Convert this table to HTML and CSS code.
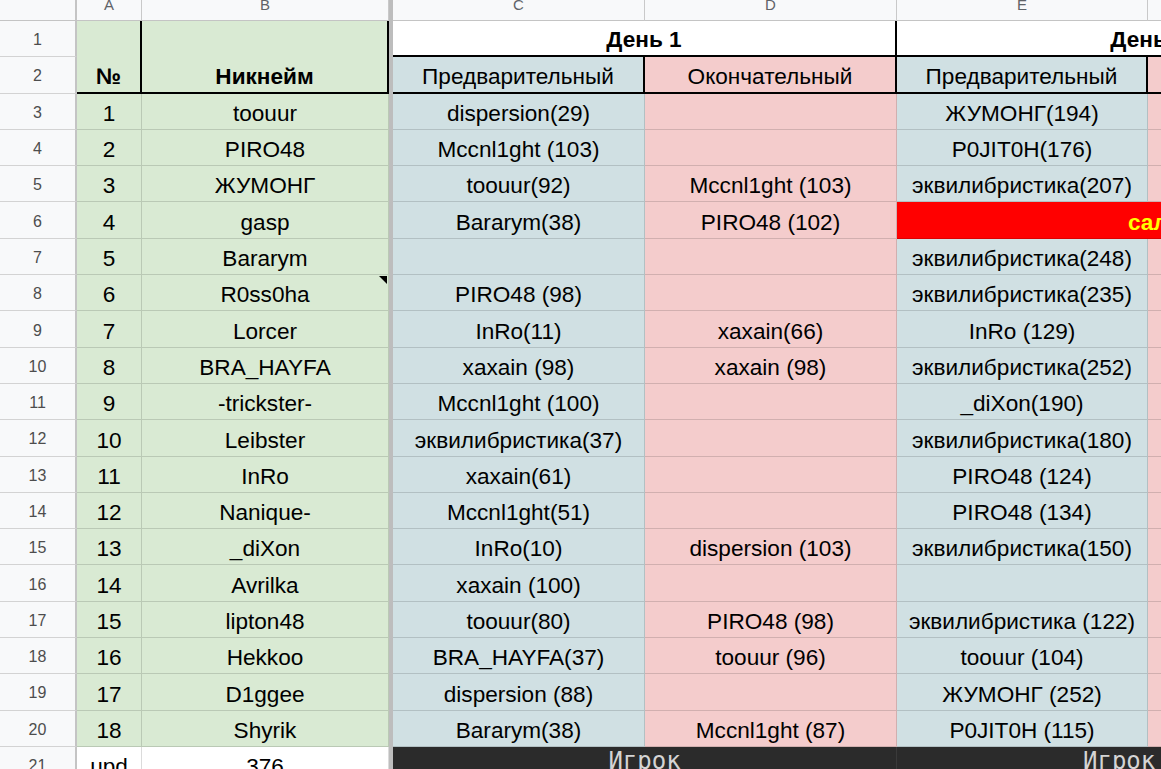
FILE: index.html
```html
<!DOCTYPE html>
<html lang="ru">
<head>
<meta charset="utf-8">
<title>Sheet</title>
<link rel="stylesheet" href="styles.css">
</head>
<body>
<div class="sheet">
  <div class="fz"></div>

  <div class="c h corner"></div>
  <div class="c h">A</div>
  <div class="c h">B</div>
  <div class="c h">C</div>
  <div class="c h">D</div>
  <div class="c h">E</div>
  <div class="c h">F</div>

  <div class="c rn">1</div>
  <div class="c g rs2 bb br bold">№</div>
  <div class="c g rs2 bb br bold">Никнейм</div>
  <div class="c w cs2 bb br bold">День 1</div>
  <div class="c w cs2 bb bold">День 2</div>

  <div class="c rn">2</div>
  <div class="c b bb br">Предварительный</div>
  <div class="c p bb br">Окончательный</div>
  <div class="c b bb br">Предварительный</div>
  <div class="c p bb">Окончательный</div>

  <div class="c rn">3</div><div class="c g">1</div><div class="c g">toouur</div><div class="c b">dispersion(29)</div><div class="c p"></div><div class="c b">ЖУМОНГ(194)</div><div class="c p"></div>
  <div class="c rn">4</div><div class="c g">2</div><div class="c g">PIRO48</div><div class="c b">Mccnl1ght (103)</div><div class="c p"></div><div class="c b">P0JIT0H(176)</div><div class="c p"></div>
  <div class="c rn">5</div><div class="c g">3</div><div class="c g">ЖУМОНГ</div><div class="c b">toouur(92)</div><div class="c p">Mccnl1ght (103)</div><div class="c b">эквилибристика(207)</div><div class="c p"></div>
  <div class="c rn">6</div><div class="c g">4</div><div class="c g">gasp</div><div class="c b">Bararym(38)</div><div class="c p">PIRO48 (102)</div><div class="c r cs2 red-text">сал</div>
  <div class="c rn">7</div><div class="c g">5</div><div class="c g">Bararym</div><div class="c b"></div><div class="c p"></div><div class="c b">эквилибристика(248)</div><div class="c p"></div>
  <div class="c rn">8</div><div class="c g">6</div><div class="c g note">R0ss0ha<span class="tri"></span></div><div class="c b">PIRO48 (98)</div><div class="c p"></div><div class="c b">эквилибристика(235)</div><div class="c p"></div>
  <div class="c rn">9</div><div class="c g">7</div><div class="c g">Lorcer</div><div class="c b">InRo(11)</div><div class="c p">xaxain(66)</div><div class="c b">InRo (129)</div><div class="c p"></div>
  <div class="c rn">10</div><div class="c g">8</div><div class="c g">BRA_HAYFA</div><div class="c b">xaxain (98)</div><div class="c p">xaxain (98)</div><div class="c b">эквилибристика(252)</div><div class="c p"></div>
  <div class="c rn">11</div><div class="c g">9</div><div class="c g">-trickster-</div><div class="c b">Mccnl1ght (100)</div><div class="c p"></div><div class="c b">_diXon(190)</div><div class="c p"></div>
  <div class="c rn">12</div><div class="c g">10</div><div class="c g">Leibster</div><div class="c b">эквилибристика(37)</div><div class="c p"></div><div class="c b">эквилибристика(180)</div><div class="c p"></div>
  <div class="c rn">13</div><div class="c g">11</div><div class="c g">InRo</div><div class="c b">xaxain(61)</div><div class="c p"></div><div class="c b">PIRO48 (124)</div><div class="c p"></div>
  <div class="c rn">14</div><div class="c g">12</div><div class="c g">Nanique-</div><div class="c b">Mccnl1ght(51)</div><div class="c p"></div><div class="c b">PIRO48 (134)</div><div class="c p"></div>
  <div class="c rn">15</div><div class="c g">13</div><div class="c g">_diXon</div><div class="c b">InRo(10)</div><div class="c p">dispersion (103)</div><div class="c b">эквилибристика(150)</div><div class="c p"></div>
  <div class="c rn">16</div><div class="c g">14</div><div class="c g">Avrilka</div><div class="c b">xaxain (100)</div><div class="c p"></div><div class="c b"></div><div class="c p"></div>
  <div class="c rn">17</div><div class="c g">15</div><div class="c g">lipton48</div><div class="c b">toouur(80)</div><div class="c p">PIRO48 (98)</div><div class="c b">эквилибристика (122)</div><div class="c p"></div>
  <div class="c rn">18</div><div class="c g">16</div><div class="c g">Hekkoo</div><div class="c b">BRA_HAYFA(37)</div><div class="c p">toouur (96)</div><div class="c b">toouur (104)</div><div class="c p"></div>
  <div class="c rn">19</div><div class="c g">17</div><div class="c g">D1ggee</div><div class="c b">dispersion (88)</div><div class="c p"></div><div class="c b">ЖУМОНГ (252)</div><div class="c p"></div>
  <div class="c rn">20</div><div class="c g">18</div><div class="c g">Shyrik</div><div class="c b">Bararym(38)</div><div class="c p">Mccnl1ght (87)</div><div class="c b">P0JIT0H (115)</div><div class="c p"></div>

  <div class="c rn">21</div>
  <div class="c w">upd</div>
  <div class="c w">376</div>
  <div class="c dk cs2">Игрок</div>
  <div class="c dk cs2 dk-shift">Игрок</div>
</div>
</body>
</html>
```

FILE: styles.css
```css
html, body {
  margin: 0;
  padding: 0;
}

body {
  overflow: hidden;
  background: #ffffff;
  font-family: "Liberation Sans", Arial, sans-serif;
}

.sheet {
  display: grid;
  grid-template-columns: 77px 65px 247px 4px 252px 252px 251px 252px;
  grid-template-rows: 21px repeat(21, 36.3px);
  width: 1400px;
}

.c {
  box-sizing: border-box;
  min-width: 0;
  display: flex;
  align-items: flex-end;
  justify-content: center;
  padding-bottom: 2px;
  font-size: 22.6px;
  color: #000;
  white-space: nowrap;
  overflow: hidden;
  border-right: 1px solid rgba(0, 0, 0, 0.14);
  border-bottom: 1px solid rgba(0, 0, 0, 0.14);
}

.fz {
  grid-column: 4;
  grid-row: 1 / -1;
  background: #bdbdbd;
}

.h {
  background: #f8f9fa;
  color: #5f6368;
  font-size: 15px;
  line-height: 10px;
  align-items: flex-start;
  padding: 0;
  border-right: 1px solid #c9c9c9;
  border-bottom: 1px solid #c4c4c4;
}

.corner {
  border-right: 2px solid #c4c4c4;
}

.rn {
  background: #f8f9fa;
  color: #4d4d4d;
  font-size: 16px;
  align-items: center;
  padding: 3px 0 0 0;
  border-right: 2px solid #c4c4c4;
  border-bottom: 1px solid #d3d3d3;
}

.g { background: #d9ead3; }
.b { background: #d0e0e3; }
.p { background: #f4cccc; }
.w { background: #ffffff; }

.r {
  background: #ff0000;
  color: #ffff00;
  font-weight: bold;
}

.red-text {
  justify-content: flex-start;
  padding-left: 231px;
}

.dk {
  background: #2b2b2b;
  color: #d4d4d4;
  font-family: "DejaVu Sans Mono", monospace;
  font-size: 24px;
  align-items: flex-start;
  padding: 0;
  border-right: 1px solid #3a3a3a;
  border-bottom: none;
}

.dk-shift {
  justify-content: flex-start;
  padding-left: 186px;
}

.bold { font-weight: bold; }

.rs2 { grid-row: span 2; }
.cs2 { grid-column: span 2; }

.bb { border-bottom: 2px solid #000; }
.br { border-right: 2px solid #000; }

.note { position: relative; }

.tri {
  position: absolute;
  top: 1px;
  right: 1px;
  width: 0;
  height: 0;
  border-top: 8px solid #000;
  border-left: 8px solid transparent;
}
```
